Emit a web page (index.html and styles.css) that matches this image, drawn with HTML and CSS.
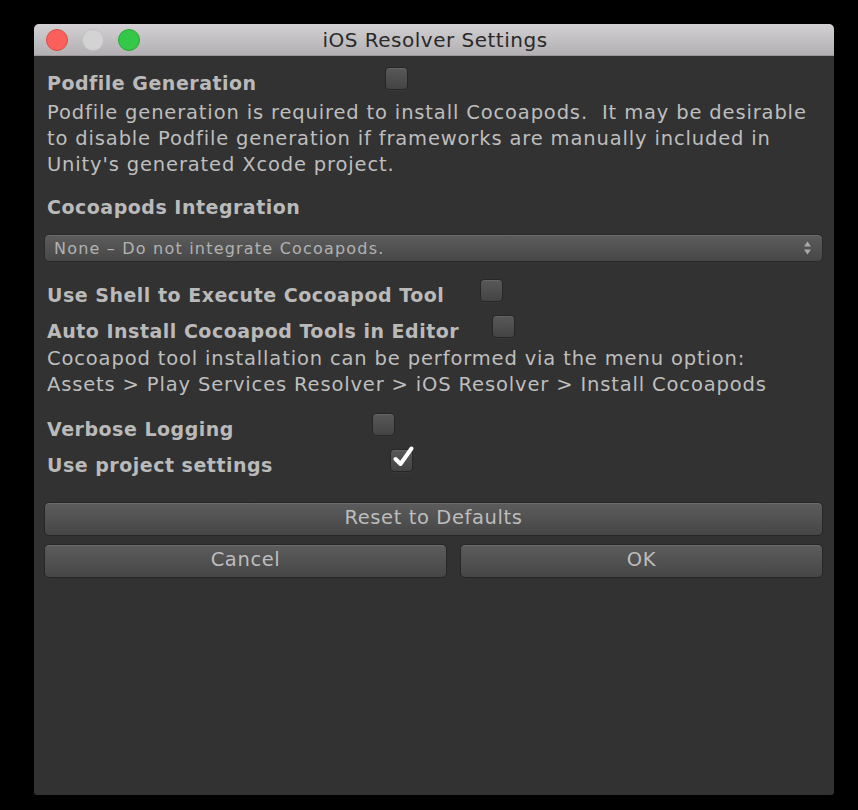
FILE: index.html
```html
<!DOCTYPE html>
<html>
<head>
<meta charset="utf-8">
<link rel="stylesheet" href="styles.css">
</head>
<body>
<div class="window">
  <div class="titlebar">
    <div class="lights">
      <span class="light red"></span>
      <span class="light gray"></span>
      <span class="light green"></span>
    </div>
    <div class="title">iOS Resolver Settings</div>
  </div>
  <div class="content">
    <div class="row row-podfile">
      <span class="label">Podfile Generation</span>
      <span class="check"></span>
    </div>
    <p class="desc desc-podfile">Podfile generation is required to install Cocoapods.&nbsp; It may be desirable<br>to disable Podfile generation if frameworks are manually included in<br>Unity's generated Xcode project.</p>

    <div class="row row-heading">
      <span class="label">Cocoapods Integration</span>
    </div>
    <div class="dropdown">
      <span class="dd-text">None – Do not integrate Cocoapods.</span>
      <svg class="dd-arrows" width="9" height="16" viewBox="0 0 9 16"><path d="M4.5 1.5 L8 6.5 L1 6.5 Z" fill="#aaaaaa"/><path d="M4.5 14.5 L8 9.5 L1 9.5 Z" fill="#aaaaaa"/></svg>
    </div>

    <div class="row row-shell">
      <span class="label">Use Shell to Execute Cocoapod Tool</span>
      <span class="check"></span>
    </div>
    <div class="row row-auto">
      <span class="label">Auto Install Cocoapod Tools in Editor</span>
      <span class="check"></span>
    </div>
    <p class="desc">Cocoapod tool installation can be performed via the menu option:<br>Assets &gt; Play Services Resolver &gt; iOS Resolver &gt; Install Cocoapods</p>

    <div class="row row-verbose">
      <span class="label">Verbose Logging</span>
      <span class="check"></span>
    </div>
    <div class="row row-project">
      <span class="label">Use project settings</span>
      <span class="check checked">
        <svg width="26" height="26" viewBox="0 0 26 26"><path d="M5.5 15 L10.5 20 L21.5 4.5" fill="none" stroke="#ffffff" stroke-width="4" stroke-linecap="round" stroke-linejoin="round"/></svg>
      </span>
    </div>

    <button class="btn btn-reset">Reset to Defaults</button>
    <div class="btn-row">
      <button class="btn">Cancel</button>
      <button class="btn">OK</button>
    </div>
  </div>
</div>
</body>
</html>
```
FILE: styles.css
```css
html, body {
  margin: 0;
  padding: 0;
  background: #000;
}
body {
  width: 858px;
  height: 810px;
  overflow: hidden;
  font-family: "DejaVu Sans", "Liberation Sans", sans-serif;
}
.window {
  margin: 24px 0 0 34px;
  width: 800px;
  height: 771px;
  background: #323232;
  border-radius: 5px 5px 3px 3px;
  overflow: hidden;
  display: flex;
  flex-direction: column;
}
.titlebar {
  height: 31px;
  flex: none;
  background: linear-gradient(#d2d0d2, #b2b0b2);
  border-bottom: 1px solid #9c9a9c;
  position: relative;
  display: flex;
  align-items: center;
  justify-content: center;
}
.lights {
  position: absolute;
  left: 12px;
  top: 5px;
  display: flex;
  gap: 14px;
}
.light {
  width: 20px;
  height: 20px;
  border-radius: 50%;
  border: 1px solid rgba(0,0,0,0.15);
}
.red { background: #fc605b; border-color: #de4a44; }
.gray { background: #d3d3d3; border-color: #c2c2c2; }
.green { background: #34c748; border-color: #2aa73b; }
.title {
  color: #2a2a2a;
  font-size: 20px;
  letter-spacing: 0.5px;
  padding-left: 2px;
}
.content {
  padding: 13px 11px 0 10px;
  flex: 1;
}
.row {
  display: flex;
  align-items: center;
  height: 30px;
  padding-left: 3px;
}
.label {
  color: #bababa;
  font-weight: bold;
  font-size: 19px;
  letter-spacing: 0.5px;
  white-space: nowrap;
  flex: none;
}
.check {
  width: 23px;
  height: 23px;
  box-sizing: border-box;
  border-radius: 4px;
  border: 1px solid #262626;
  background: linear-gradient(#585858, #444444);
  box-shadow: inset 0 1px 0 rgba(255,255,255,0.08), 0 1px 0 rgba(255,255,255,0.03);
  margin-bottom: 10px;
  position: relative;
  flex: none;
}
.check svg {
  position: absolute;
  left: -1px;
  top: -6px;
}
.desc {
  margin: 0;
  padding-left: 3px;
  color: #bebebe;
  font-size: 19.5px;
  letter-spacing: 0.85px;
  line-height: 26px;
  white-space: nowrap;
}
.row-podfile { height: 28px; }
.row-podfile .label { width: 338px; }
.desc-podfile { margin-top: 3px; }
.row-heading { height: 28px; margin-top: 15px; }
.row-shell { margin-top: 18px; }
.row-shell .label { width: 433px; }
.row-auto { margin-top: 6px; }
.row-auto .label { width: 445px; }
.row-verbose { margin-top: 16px; }
.row-verbose .label { width: 325px; }
.row-project { margin-top: 6px; }
.row-project .label { width: 343px; }
.dropdown {
  margin-top: 13px;
  height: 28px;
  box-sizing: border-box;
  border-radius: 5px;
  border: 1px solid #2a2a2a;
  background: linear-gradient(#5c5c5c, #474747);
  box-shadow: inset 0 1px 0 rgba(255,255,255,0.1);
  display: flex;
  align-items: center;
  justify-content: space-between;
  padding: 0 10px 0 9px;
}
.dd-text {
  color: #b2b2b2;
  font-size: 16px;
  letter-spacing: 1.2px;
}
.btn {
  display: block;
  width: 100%;
  height: 34px;
  box-sizing: border-box;
  border-radius: 5px;
  border: 1px solid #262626;
  background: linear-gradient(#5c5c5c, #464646);
  box-shadow: inset 0 1px 0 rgba(255,255,255,0.1);
  color: #bdbdbd;
  font-family: "DejaVu Sans", "Liberation Sans", sans-serif;
  font-size: 19.5px;
  letter-spacing: 0.6px;
  padding: 0 0 3px 0;
}
.btn-reset { margin-top: 22px; }
.btn-row {
  margin-top: 8px;
  display: grid;
  grid-template-columns: 403px 363px;
  gap: 13px;
}
```
